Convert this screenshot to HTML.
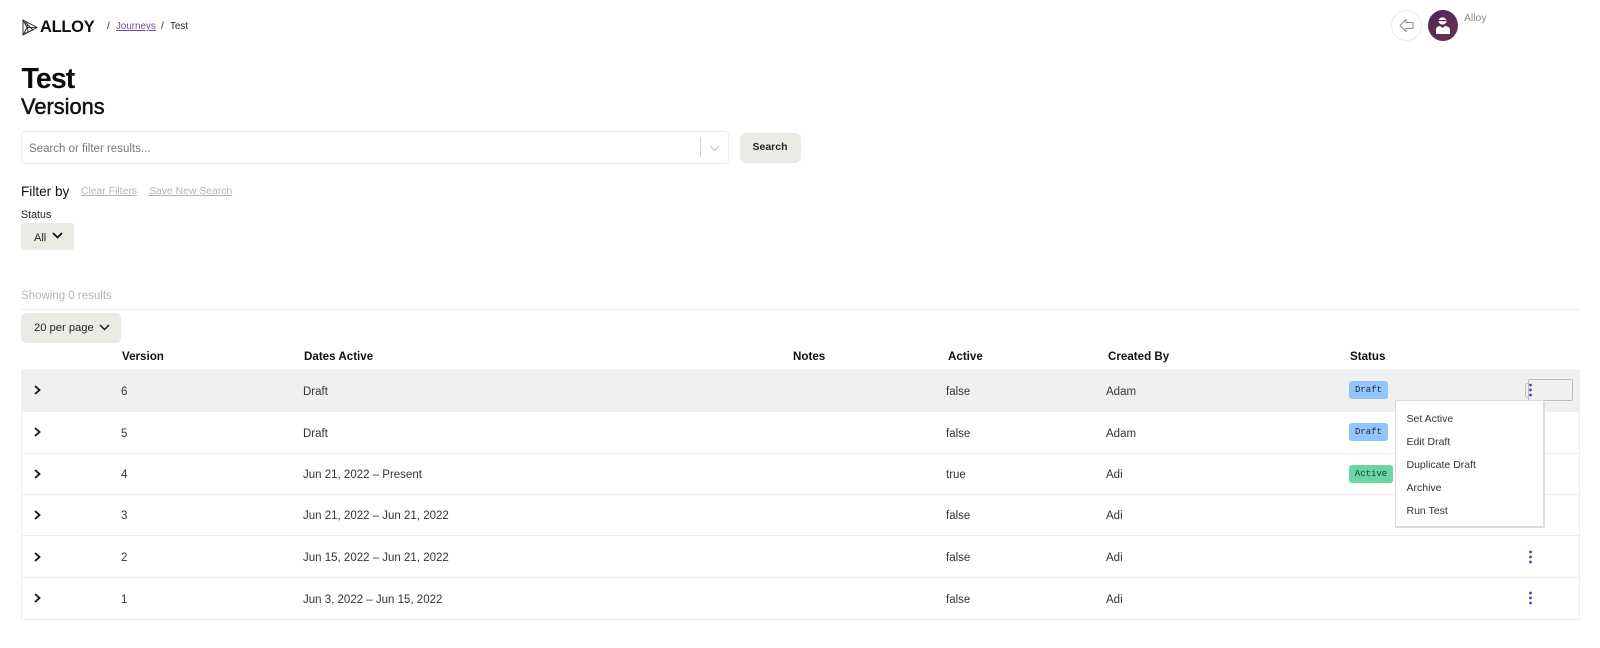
<!DOCTYPE html>
<html lang="en">
<head>
<meta charset="utf-8">
<title>Test Versions</title>
<style>
html,body{margin:0;padding:0;background:#fff;}
body{width:1600px;height:648px;position:relative;overflow:hidden;font-family:"Liberation Sans",sans-serif;color:#1a1a1a;}
.t{position:absolute;white-space:nowrap;line-height:16px;height:16px;}
.box{position:absolute;box-sizing:border-box;}
.c{font-size:11.5px;color:#333;}
.h{font-size:11.6px;font-weight:bold;color:#111;top:349px;}
.line{position:absolute;left:21px;width:1559px;height:1px;background:#eeeeee;}
.badge{position:absolute;left:1349px;height:18px;line-height:19px;border-radius:3px;font-family:"Liberation Mono",monospace;font-size:9px;text-align:center;color:#1c2b3a;}
.m{position:absolute;left:1406.5px;font-size:10.5px;line-height:14px;height:14px;color:#333;white-space:nowrap;}
svg{position:absolute;display:block;overflow:visible;}
</style>
</head>
<body>

<!-- logo -->
<svg style="left:22px;top:19px" width="16" height="17" viewBox="0 0 16 17" fill="none" stroke="#222" stroke-width="0.9">
<path d="M1 1L15 8.5L1 16Z"/><path d="M1 1L5 8.5L1 16"/><path d="M5 8.5L15 8.5"/><path d="M3 3L11 11L2.5 14.5"/><path d="M5 4L6 13.5"/>
</svg>
<div class="t" style="left:40px;top:18px;font-size:16.5px;font-weight:bold;letter-spacing:-.3px;color:#111;line-height:18px;height:18px;">ALLOY</div>

<div class="t" style="left:107px;top:19px;font-size:9.8px;color:#222;">/</div>
<div class="t" style="left:116px;top:19px;font-size:9.8px;color:#6b4f9a;text-decoration:underline;">Journeys</div>
<div class="t" style="left:161px;top:19px;font-size:9.8px;color:#222;">/</div>
<div class="t" style="left:170px;top:19px;font-size:9.8px;color:#222;">Test</div>

<!-- top right -->
<div class="box" style="left:1391px;top:10px;width:31px;height:31px;border-radius:50%;border:1px solid #ececec;"></div>
<svg style="left:1399px;top:18px" width="15" height="15" viewBox="0 0 15 15" fill="none" stroke="#8a8a8a" stroke-width="1">
<path d="M1 7.5L7 1.5V4.5H14V10.5H7V13.5Z" stroke-linejoin="round"/>
</svg>
<div class="box" style="left:1428px;top:10px;width:30px;height:31px;border-radius:50%;background:linear-gradient(135deg,#472a58,#6d2f55);"></div>
<svg style="left:1428px;top:10px" width="30" height="31" viewBox="0 0 30 31" fill="#fff">
<ellipse cx="14.5" cy="11" rx="4" ry="3.6"/>
<path d="M8 24V19.5C8 17.5 10 16 12 16L14.5 18L17 16C19 16 22 17.5 22 19.5V24Z"/>
<path d="M10.5 10H18V11.2H10.5Z" fill="#55294f"/>
</svg>
<div class="t" style="left:1464px;top:11px;font-size:10.4px;color:#8a8a8a;">Alloy</div>

<!-- title -->
<div class="t" style="left:21.5px;top:62px;height:34px;line-height:34px;font-size:28.5px;font-weight:bold;color:#0a0a0a;letter-spacing:-.9px;">Test</div>
<div class="t" style="left:21px;top:94px;height:26px;line-height:26px;font-size:21.8px;color:#111;-webkit-text-stroke:.5px #111;">Versions</div>

<!-- search -->
<div class="box" style="left:21px;top:131px;width:708px;height:33px;border:1px solid #ececec;border-radius:4px;"></div>
<div class="t" style="left:29px;top:141px;font-size:11.5px;color:#777;">Search or filter results...</div>
<div class="box" style="left:700px;top:137px;width:1px;height:20px;background:#d0d0d0;"></div>
<svg style="left:709px;top:145px" width="11" height="7" viewBox="0 0 11 7" fill="none" stroke="#c4c4c4" stroke-width="1.2"><path d="M1 1L5.5 5.5L10 1"/></svg>
<div class="box" style="left:740px;top:133px;width:61px;height:30px;background:#ebebe6;border-radius:6px;"></div>
<div class="t" style="left:740px;top:139px;width:60px;text-align:center;font-size:10.5px;font-weight:bold;color:#222;">Search</div>

<!-- filter -->
<div class="t" style="left:21px;top:184px;font-size:13.6px;color:#111;">Filter by</div>
<div class="t" style="left:81px;top:184px;font-size:10.4px;color:#b4b4b4;text-decoration:underline;">Clear Filters</div>
<div class="t" style="left:149px;top:184px;font-size:10.4px;color:#b4b4b4;text-decoration:underline;">Save New Search</div>
<div class="t" style="left:21px;top:207px;font-size:10.7px;color:#222;">Status</div>
<div class="box" style="left:21px;top:223px;width:53px;height:27px;background:#ebebe6;border-radius:3px;"></div>
<div class="t" style="left:34px;top:230px;font-size:11px;color:#222;">All</div>
<svg style="left:52px;top:232px" width="11" height="7" viewBox="0 0 11 7" fill="none" stroke="#111" stroke-width="1.7"><path d="M1 1L5.5 5.5L10 1"/></svg>

<div class="t" style="left:21px;top:288px;font-size:11.5px;color:#b4b4b4;">Showing 0 results</div>
<div class="line" style="top:309px;"></div>
<div class="box" style="left:21px;top:313px;width:100px;height:30px;background:#ebebe6;border-radius:5px;"></div>
<div class="t" style="left:34px;top:320px;font-size:11.2px;color:#222;">20 per page</div>
<svg style="left:99px;top:324px" width="11" height="7" viewBox="0 0 11 7" fill="none" stroke="#111" stroke-width="1.4"><path d="M1 1L5.5 5.5L10 1"/></svg>

<!-- table head -->
<div class="t h" style="left:122px;">Version</div>
<div class="t h" style="left:304px;">Dates Active</div>
<div class="t h" style="left:793px;">Notes</div>
<div class="t h" style="left:948px;">Active</div>
<div class="t h" style="left:1108px;">Created By</div>
<div class="t h" style="left:1350px;">Status</div>

<!-- table -->
<div class="box" style="left:21px;top:369px;width:1559px;height:251px;border:1px solid #eeeeee;border-top:0;"></div>
<div class="box" style="left:21px;top:369px;width:1559px;height:43px;background:#f0f0f0;"></div>
<div class="line" style="top:453px;"></div>
<div class="line" style="top:494px;"></div>
<div class="line" style="top:535px;"></div>
<div class="line" style="top:577px;"></div>

<!-- row chevrons -->
<svg style="left:33.5px;top:385px" width="7" height="10" viewBox="0 0 7 10" fill="none" stroke="#111" stroke-width="1.8"><path d="M1 1L5.5 5L1 9"/></svg>
<svg style="left:33.5px;top:427px" width="7" height="10" viewBox="0 0 7 10" fill="none" stroke="#111" stroke-width="1.8"><path d="M1 1L5.5 5L1 9"/></svg>
<svg style="left:33.5px;top:468.5px" width="7" height="10" viewBox="0 0 7 10" fill="none" stroke="#111" stroke-width="1.8"><path d="M1 1L5.5 5L1 9"/></svg>
<svg style="left:33.5px;top:510px" width="7" height="10" viewBox="0 0 7 10" fill="none" stroke="#111" stroke-width="1.8"><path d="M1 1L5.5 5L1 9"/></svg>
<svg style="left:33.5px;top:552px" width="7" height="10" viewBox="0 0 7 10" fill="none" stroke="#111" stroke-width="1.8"><path d="M1 1L5.5 5L1 9"/></svg>
<svg style="left:33.5px;top:593px" width="7" height="10" viewBox="0 0 7 10" fill="none" stroke="#111" stroke-width="1.8"><path d="M1 1L5.5 5L1 9"/></svg>

<!-- rows -->
<div class="t c" style="left:121px;top:384px;">6</div>
<div class="t c" style="left:303px;top:384px;">Draft</div>
<div class="t c" style="left:946px;top:384px;">false</div>
<div class="t c" style="left:1106px;top:384px;">Adam</div>

<div class="t c" style="left:121px;top:426px;">5</div>
<div class="t c" style="left:303px;top:426px;">Draft</div>
<div class="t c" style="left:946px;top:426px;">false</div>
<div class="t c" style="left:1106px;top:426px;">Adam</div>

<div class="t c" style="left:121px;top:467px;">4</div>
<div class="t c" style="left:303px;top:467px;">Jun 21, 2022 – Present</div>
<div class="t c" style="left:946px;top:467px;">true</div>
<div class="t c" style="left:1106px;top:467px;">Adi</div>

<div class="t c" style="left:121px;top:508px;">3</div>
<div class="t c" style="left:303px;top:508px;">Jun 21, 2022 – Jun 21, 2022</div>
<div class="t c" style="left:946px;top:508px;">false</div>
<div class="t c" style="left:1106px;top:508px;">Adi</div>

<div class="t c" style="left:121px;top:550px;">2</div>
<div class="t c" style="left:303px;top:550px;">Jun 15, 2022 – Jun 21, 2022</div>
<div class="t c" style="left:946px;top:550px;">false</div>
<div class="t c" style="left:1106px;top:550px;">Adi</div>

<div class="t c" style="left:121px;top:592px;">1</div>
<div class="t c" style="left:303px;top:592px;">Jun 3, 2022 – Jun 15, 2022</div>
<div class="t c" style="left:946px;top:592px;">false</div>
<div class="t c" style="left:1106px;top:592px;">Adi</div>

<!-- badges -->
<div class="badge" style="top:381px;width:39px;background:#93c5fd;">Draft</div>
<div class="badge" style="top:423px;width:39px;background:#93c5fd;">Draft</div>
<div class="badge" style="top:465px;width:44px;background:#69d7a3;color:#14402c;">Active</div>

<!-- kebabs -->
<div class="box" style="left:1525px;top:383px;width:8px;height:15px;border:1px solid #bdbdbd;border-right:0;border-radius:3px 0 0 3px;"></div>
<div class="box" style="left:1528px;top:379px;width:45px;height:22px;border:1px solid #bdbdbd;border-radius:2px;background:#f0f0f0;"></div>
<svg style="left:1527.5px;top:383px" width="5" height="14" viewBox="0 0 5 14" fill="#5b3f97"><circle cx="2.5" cy="2" r="1.4"/><circle cx="2.5" cy="7" r="1.4"/><circle cx="2.5" cy="12" r="1.4"/></svg>
<svg style="left:1527.5px;top:550px" width="5" height="14" viewBox="0 0 5 14" fill="#5b3f97"><circle cx="2.5" cy="2" r="1.4"/><circle cx="2.5" cy="7" r="1.4"/><circle cx="2.5" cy="12" r="1.4"/></svg>
<svg style="left:1527.5px;top:591px" width="5" height="14" viewBox="0 0 5 14" fill="#5b3f97"><circle cx="2.5" cy="2" r="1.4"/><circle cx="2.5" cy="7" r="1.4"/><circle cx="2.5" cy="12" r="1.4"/></svg>

<!-- menu -->
<div class="box" style="left:1395px;top:400px;width:150px;height:128px;background:#fff;border:1px solid #dcdcdc;border-right:2px solid #dcdcdc;border-bottom:2px solid #dcdcdc;border-radius:2px;"></div>
<div class="m" style="top:412px;">Set Active</div>
<div class="m" style="top:435px;">Edit Draft</div>
<div class="m" style="top:458px;">Duplicate Draft</div>
<div class="m" style="top:481px;">Archive</div>
<div class="m" style="top:504px;">Run Test</div>

</body>
</html>
